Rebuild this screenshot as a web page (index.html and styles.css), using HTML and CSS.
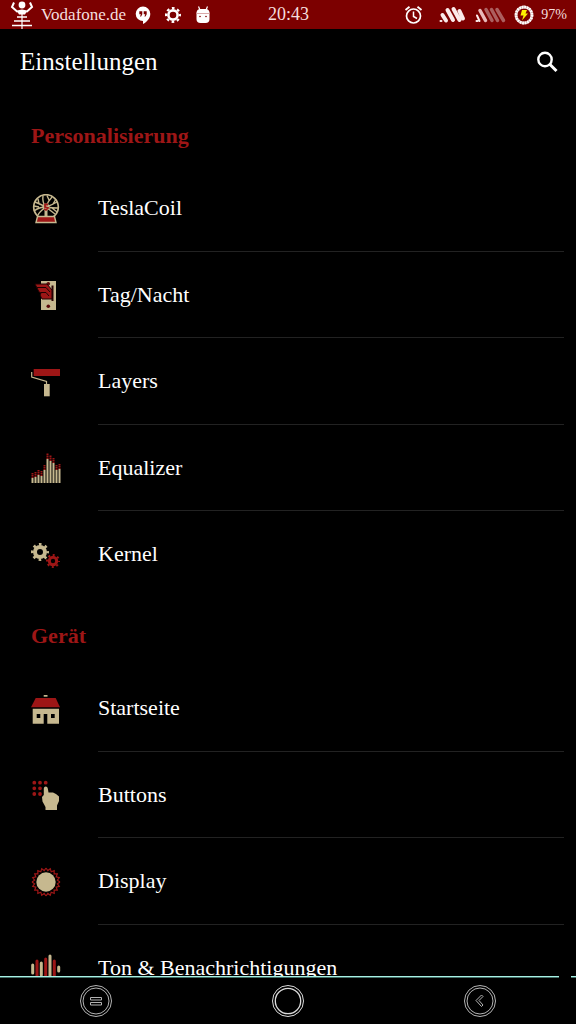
FILE: index.html
```
<!DOCTYPE html>
<html lang="de">
<head>
    <meta charset="UTF-8">
    <meta name="viewport" content="width=device-width, initial-scale=1.0">
    <title>Einstellungen</title>
    <link rel="stylesheet" href="styles.css">
</head>
<body>
    <!-- Status bar -->
    <div class="status-bar">
        <div class="status-left">
            <svg width="24" height="28" viewBox="0 0 24 28" fill="none" stroke="#fff">
                <circle cx="12" cy="4" r="3.400" fill="#fff" stroke="none"/>
                <path d="M4 1.500L2 6L7 10.500L12 9.500L17 10.500L22 6L20 1.500" stroke-width="2"/>
                <path d="M7 10L9 13.500H15L17 10Z" fill="#fff" stroke="none"/>
                <path d="M12 9V28" stroke-width="1.200"/>
                <path d="M7 16H17M4 20H20M2 24.500H22" stroke-width="1.500"/>
            </svg>
            <span class="carrier">Vodafone.de</span>
            <div class="notifications">
                <svg width="16" height="18" viewBox="0 0 16 18">
                    <path d="M8 0.500a7.300 7.300 0 0 0 0 14.600v2.900c4-2 7.300-5.600 7.300-10.200A7.300 7.300 0 0 0 8 0.500z" fill="#fff"/>
                    <path d="M4.300 5.200h3v3l-1.200 2.300H5l.9-2.300H4.300zM8.700 5.200h3v3l-1.200 2.300H9.400l.9-2.300H8.700z" fill="#7c0000"/>
                </svg>
                <svg width="16" height="16" viewBox="0 0 16 16" fill="none" stroke="#fff">
                    <circle cx="8" cy="8" r="4.600" stroke-width="2.600"/>
                    <circle cx="8" cy="8" r="6.900" stroke-width="2.200" stroke-dasharray="2.710" stroke-dashoffset="1.355"/>
                </svg>
                <svg width="16" height="18" viewBox="0 0 16 18">
                    <path d="M3.500 0.500L5 4M12.500 0.500L11 4" stroke="#fff" stroke-width="1.200"/>
                    <path d="M1.500 6.500Q2 3 5 3h6q3 0 3.500 3.500V13q0 4-4 4h-5q-4 0-4-4z" fill="#fff"/>
                    <path d="M1.500 7.500h13" stroke="#d9a9a9"/>
                    <circle cx="5" cy="10.500" r="0.800" fill="#7c0000"/>
                    <circle cx="11" cy="10.500" r="0.800" fill="#7c0000"/>
                </svg>
            </div>
        </div>
        <time class="clock">20:43</time>
        <div class="status-right">
            <svg width="28" height="20" viewBox="0 0 28 20" fill="none" stroke="#fff">
                <circle cx="9.500" cy="11" r="7" stroke-width="1.700"/>
                <path d="M9.500 6.500V11.500L13 13.500" stroke-width="1.500"/>
                <path d="M1.500 5L5.500 1.800M17.500 5L13.500 1.800" stroke-width="1.800"/>
            </svg>
            <svg width="29" height="18" viewBox="0 0 29 18" stroke="#fbeaea" stroke-width="4" stroke-linecap="round">
                <path d="M3.500 9L7 14.500M8.500 4L14 14M14.500 3L20.500 14M20.500 5L24 12.500"/>
                <path d="M1.500 15h1" stroke-width="2"/>
            </svg>
            <svg width="32" height="18" viewBox="0 0 32 18" stroke="#ac5f5f" stroke-width="3.500" stroke-linecap="round">
                <path d="M11 3.500L17 14.500M16.500 3.500L22.500 14.500M22 3.500L28.500 14.500"/>
                <path d="M5 4.500L10.500 14.500" stroke="#e9b9b9"/>
                <path d="M2 9.500L4.500 15M1.500 15h1" stroke="#fbeaea" stroke-width="2"/>
            </svg>
            <svg width="20" height="20" viewBox="0 0 20 20" fill="none">
                <circle cx="10" cy="10" r="8" stroke="#c9a0a0" stroke-width="2.800"/>
                <circle cx="10" cy="10" r="8" stroke="#fff" stroke-width="2.800" stroke-dasharray="1.800 0.713"/>
                <path d="M8 5h5l-1.500 3.500H14l-6 7 1.500-5H6.500z" fill="#ffee00"/>
            </svg>
            <span class="battery">97%</span>
        </div>
    </div>

    <header class="app-bar">
        <h1>Einstellungen</h1>
        <button type="button" class="search" aria-label="Suchen">
            <svg width="24" height="24" viewBox="0 0 24 24" fill="none" stroke="#fff">
                <circle cx="9" cy="9.500" r="6.700" stroke-width="2.400"/>
                <path d="M13.500 14L20.500 21" stroke-width="3"/>
            </svg>
        </button>
    </header>

    <main class="settings">
        <section>
            <h2>Personalisierung</h2>
            <ul>
                <li><a href="#teslacoil">
                    <svg class="icon" viewBox="0 0 30 30" fill="none" stroke="#c6b88f">
                        <circle cx="15" cy="13" r="12.300" stroke-width="1.700"/>
                        <path d="M15 13Q11 9 12 1.500M15 13Q17 7 21 3M15 13Q21 11 26 8M15 13Q21 14 27 14M15 13Q20 17 24 20M15 13Q8 13 3 17M15 13Q9 10 4 8M15 13Q9 17 7 21M18 6L16 1.500M22 10L25 5M8 10L7 5M21 14L26 18M8 13L3 12" stroke-width="1.400"/>
                        <path d="M15 13V22" stroke-width="3"/>
                        <circle cx="15" cy="13" r="3.500" fill="#c6b88f" stroke="none"/>
                        <path d="M17 10.500H14V13L17 14L15 16L13 15" stroke="#a01818" stroke-width="1.800"/>
                        <path d="M6.500 22.500H23.500L25 28.500H5Z" fill="#9d1616" stroke-width="1.400"/>
                    </svg>
                    <span>TeslaCoil</span>
                </a></li>
                <li><a href="#tag-nacht">
                    <svg class="icon" viewBox="0 0 30 30">
                        <path d="M10 1H25V30H10Z" fill="#c6b88f"/>
                        <circle cx="17.300" cy="3.700" r="1.800" fill="#5a0909"/>
                        <circle cx="17.300" cy="26.300" r="1.800" fill="#5a0909"/>
                        <path d="M20.500 5.500H22.500V21H20.500Z" fill="#2a0505"/>
                        <path d="M4 4H16L21 10V19H11L9 15L10 13L8 12Z" fill="#9d1616" stroke="#1c0202"/>
                        <path d="M6 7.500H15L19 12M10 12.500H15L18 16" stroke="#1c0202" fill="none"/>
                    </svg>
                    <span>Tag/Nacht</span>
                </a></li>
                <li><a href="#layers">
                    <svg class="icon" viewBox="0 0 30 30">
                        <path d="M2.700 2H29V9H2.700Z" fill="#9d1616"/>
                        <path d="M0.700 5V10L15.500 14.500V18" fill="none" stroke="#c6b88f" stroke-width="1.200"/>
                        <path d="M13 17H18.700V29.300H13Z" fill="#c6b88f"/>
                    </svg>
                    <span>Layers</span>
                </a></li>
                <li><a href="#equalizer">
                    <svg class="icon" viewBox="0 0 30 30" fill="none" stroke-width="2">
                        <path d="M1.500 25V20M4.500 24V19M7.500 22V17M10.500 23V18M13.500 17V12M16.500 6V0M19.500 8V2M22.500 10V5M25.500 17V12M28.500 16V11" stroke="#9d1616" stroke-dasharray="1.500 0.500"/>
                        <path d="M1.500 30V25M4.500 30V24M7.500 30V22M10.500 30V23M13.500 30V17M16.500 30V6M19.500 30V8M22.500 30V10M25.500 30V17M28.500 30V16" stroke="#c6b88f"/>
                    </svg>
                    <span>Equalizer</span>
                </a></li>
                <li><a href="#kernel">
                    <svg class="icon" viewBox="0 0 30 30" fill="none">
                        <g stroke="#c6b88f">
                            <circle cx="9" cy="12" r="5" stroke-width="4"/>
                            <circle cx="9" cy="12" r="7.700" stroke-width="2.600" stroke-dasharray="2.600 3.447" stroke-dashoffset="1.300"/>
                        </g>
                        <g stroke="#9d1616">
                            <circle cx="22" cy="21" r="3.700" stroke-width="3"/>
                            <circle cx="22" cy="21" r="6" stroke-width="2" stroke-dasharray="2 2.712" stroke-dashoffset="1"/>
                        </g>
                    </svg>
                    <span>Kernel</span>
                </a></li>
            </ul>
        </section>

        <section>
            <h2>Gerät</h2>
            <ul>
                <li><a href="#startseite">
                    <svg class="icon" viewBox="0 0 30 30">
                        <path d="M12.700 1H16.500V2.700H12.700Z" fill="#c6b88f"/>
                        <path d="M4.700 4H24.700L29 13.300H0Z" fill="#9d1616"/>
                        <path d="M1.700 14.700H28V29.700H16.300V20H12.700V29.700H1.700ZM5.700 20V24H9.300V20ZM20 20V24H23.700V20Z" fill="#c6b88f" fill-rule="evenodd"/>
                    </svg>
                    <span>Startseite</span>
                </a></li>
                <li><a href="#buttons">
                    <svg class="icon" viewBox="0 0 30 30">
                        <path d="M3.300 2.700h0M9 2.700h0M14.700 2.700h0M3.300 8.300h0M9 8.300h0M3.300 14h0M9 14h0" stroke="#9d1616" stroke-width="3.800" stroke-linecap="round"/>
                        <path d="M14.700 6.500Q16.500 6.500 16.800 8.500L17.500 12.500L22 12.500L25 14L28 16.500V21L26 25.500V30H14.500V27L11.500 21.500L11 17L12.800 15V8.500Q13 6.500 14.700 6.500Z" fill="#c6b88f"/>
                    </svg>
                    <span>Buttons</span>
                </a></li>
                <li><a href="#display">
                    <svg class="icon" viewBox="-15 -15 30 30">
                        <g fill="none" stroke="#9d1616" stroke-width="1.200">
                            <path id="rays" d="M14 0L11.400 1.800L13.300 4.300L10.200 5.200L11.300 8.200L8.100 8.100L8.200 11.300L5.200 10.200L4.300 13.300L1.800 11.400L0 14"/>
                            <use href="#rays" transform="rotate(90)"/>
                            <use href="#rays" transform="rotate(180)"/>
                            <use href="#rays" transform="rotate(270)"/>
                        </g>
                        <circle r="9.700" fill="#c6b88f"/>
                    </svg>
                    <span>Display</span>
                </a></li>
                <li><a href="#ton">
                    <svg class="icon" viewBox="0 0 30 30" stroke-width="3" stroke-linecap="round">
                        <path d="M1.700 12V20M10.300 10V22M19 3V28M27.700 14V18" stroke="#c6b88f"/>
                        <path d="M6 8V24M14.700 6V26M23.300 8V24" stroke="#9d1616"/>
                    </svg>
                    <span>Ton &amp; Benachrichtigungen</span>
                </a></li>
            </ul>
        </section>
    </main>

    <!-- Navigation bar -->
    <div class="pulse"><span class="pulse-line"></span><span class="pulse-end"></span></div>
    <nav class="nav-bar">
        <button type="button" aria-label="Menü">
            <svg width="34" height="34" viewBox="0 0 34 34" fill="none" stroke="#b4b4b4">
                <circle cx="17" cy="17" r="15.500"/>
                <circle cx="17" cy="17" r="13"/>
                <path d="M11.500 13.500H22.500V16H11.500ZM11.500 18.500H22.500V21H11.500Z"/>
            </svg>
        </button>
        <button type="button" aria-label="Startbildschirm">
            <svg width="34" height="34" viewBox="0 0 34 34" fill="none" stroke="#dcdcdc">
                <circle cx="17" cy="17" r="15.500"/>
                <circle cx="17" cy="17" r="12.700" stroke-width="1.300"/>
            </svg>
        </button>
        <button type="button" aria-label="Zurück">
            <svg width="34" height="34" viewBox="0 0 34 34" fill="none" stroke="#b4b4b4">
                <circle cx="17" cy="17" r="15.500"/>
                <circle cx="17" cy="17" r="13"/>
                <path d="M18.500 11L13 16.500L18.500 22.500L20 21L16 16.500L20 12.500Z"/>
            </svg>
        </button>
    </nav>
</body>
</html>
```
FILE: styles.css
```
* {
    box-sizing: border-box;
}
body {
    margin: 0;
    height: 100vh;
    display: flex;
    flex-direction: column;
    background: #000;
    color: #fff;
    font-family: "Liberation Serif", serif;
}
h1, h2, ul {
    margin: 0;
    padding: 0;
}
svg {
    display: block;
    flex: none;
}
button {
    display: flex;
    align-items: center;
    justify-content: center;
    padding: 0;
    border: none;
    background: none;
    cursor: pointer;
}

/* Status bar */
.status-bar {
    display: grid;
    grid-template-columns: 1fr auto 1fr;
    align-items: center;
    height: 29px;
    flex: none;
    padding: 0 9px 0 10px;
    background: #7c0000;
    color: #f4dede;
}
.status-left, .status-right {
    display: flex;
    align-items: center;
    gap: 7px;
}
.status-right {
    justify-content: flex-end;
}
.notifications {
    display: flex;
    align-items: center;
    gap: 14px;
    padding-left: 2px;
}
.carrier {
    font-size: 17px;
}
.clock {
    font-size: 18px;
}
.battery {
    font-size: 14px;
}

/* Title */
.app-bar {
    display: flex;
    align-items: center;
    justify-content: space-between;
    height: 66px;
    flex: none;
    padding: 0 16px 0 20px;
}
h1 {
    font-size: 25px;
    font-weight: normal;
}

/* Settings list */
.settings {
    flex: 1;
    min-height: 0;
    padding-top: 3px;
    overflow-y: auto;
    scrollbar-width: none;
}
section {
    padding-top: 9px;
}
h2 {
    padding-left: 31px;
    font-size: 22px;
    line-height: 58px;
    color: #9d1616;
}
ul {
    list-style: none;
}
li a {
    display: flex;
    align-items: center;
    gap: 37px;
    height: 87px;
    padding: 0 12px 0 31px;
    color: #fff;
    font-size: 22px;
    text-decoration: none;
}
li:nth-child(even) a {
    height: 86px;
}
li span {
    flex: 1;
    align-self: stretch;
    line-height: 86px;
    border-bottom: 1px solid #222;
}
li:nth-child(even) span {
    line-height: 85px;
}
li:last-child span {
    border-color: transparent;
}
.icon {
    width: 30px;
    height: 30px;
}

/* Navigation bar */
.pulse {
    display: flex;
    flex: none;
    gap: 12px;
    height: 2px;
}
.pulse-line, .pulse-end {
    background: #a8f0e4;
    border-bottom: 1px solid #426f67;
}
.pulse-line {
    flex: 1;
}
.pulse-end {
    width: 5px;
}
.nav-bar {
    display: flex;
    height: 46px;
    flex: none;
}
.nav-bar button {
    flex: 1;
}
```
